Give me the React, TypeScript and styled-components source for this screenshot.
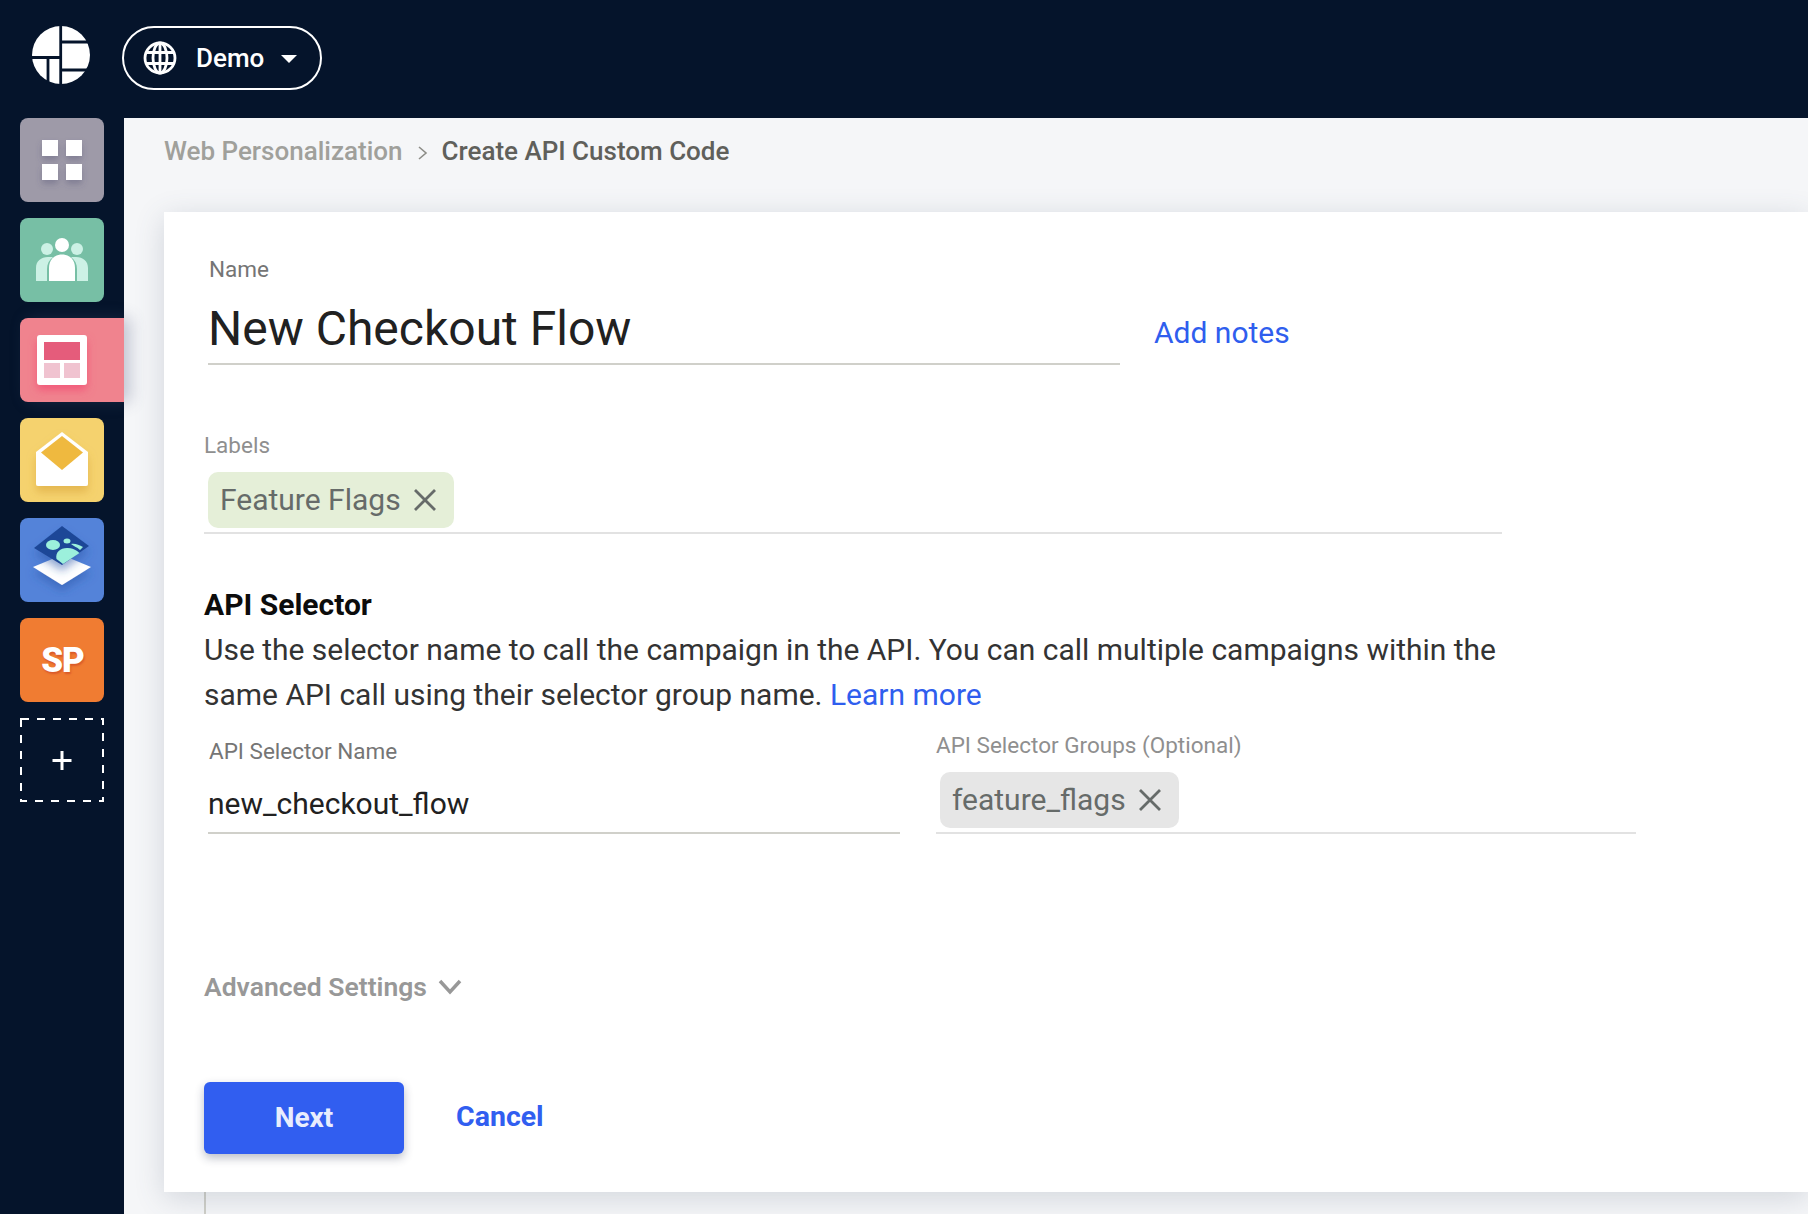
import React from "react";
import styled, { createGlobalStyle } from "styled-components";

const Global = createGlobalStyle`
  html, body { margin: 0; padding: 0; height: 100%; overflow: hidden; background: #05142b; }
  #root { height: 100%; }
  * { box-sizing: border-box; }
`;

const Page = styled.div`
  width: 1808px;
  height: 1214px;
  display: grid;
  grid-template-rows: 118px 1fr;
  background: #05142b;
  font-family: Roboto, "Liberation Sans", sans-serif;
  overflow: hidden;
`;

const TopBar = styled.header`
  display: flex;
  align-items: flex-start;
  padding: 26px 0 0 32px;
  gap: 32px;
`;

const Logo = styled.svg`
  width: 58px;
  height: 58px;
  display: block;
`;

const SitePill = styled.button`
  width: 200px;
  height: 64px;
  border: 2px solid #fff;
  border-radius: 32px;
  background: transparent;
  color: #fff;
  display: flex;
  align-items: center;
  padding: 0 0 0 19px;
  font: 500 26px/30px Roboto, sans-serif;
`;

const SiteName = styled.span`
  margin-left: 19px;
`;

const Caret = styled.span`
  margin-left: 17px;
  margin-top: 2px;
  width: 0;
  height: 0;
  border-left: 8px solid transparent;
  border-right: 8px solid transparent;
  border-top: 8px solid #fff;
`;

const Body = styled.div`
  display: grid;
  grid-template-columns: 124px 1fr;
  min-height: 0;
`;

const Sidebar = styled.nav`
  display: flex;
  flex-direction: column;
  align-items: flex-start;
  gap: 16px;
  padding-left: 20px;
`;

const Tile = styled.div<{ $bg: string; $active?: boolean }>`
  width: ${(p) => (p.$active ? "104px" : "84px")};
  height: 84px;
  flex: none;
  background: ${(p) => p.$bg};
  border-radius: ${(p) => (p.$active ? "8px 0 0 8px" : "8px")};
  box-shadow: ${(p) => (p.$active ? "6px 0 16px rgba(70, 80, 120, 0.3)" : "none")};
  position: relative;
  z-index: ${(p) => (p.$active ? 2 : 0)};
  display: flex;
  align-items: center;
  justify-content: flex-start;
`;

const TileArt = styled.svg`
  width: 84px;
  height: 84px;
  display: block;
  flex: none;
`;

const SpMark = styled.span`
  width: 84px;
  padding: 2px 0 0 1px;
  text-align: center;
  color: #fff;
  font: 900 35px/82px Roboto, sans-serif;
  letter-spacing: -1px;
  text-shadow: 1px 2px 2px #d95a2a;
`;

const AddTile = styled.div`
  width: 84px;
  height: 84px;
  flex: none;
`;

const Main = styled.main`
  background: #f5f6f8;
  min-width: 0;
  display: flex;
  flex-direction: column;
  padding-left: 40px;
`;

const Breadcrumb = styled.div`
  height: 94px;
  flex: none;
  padding-top: 18px;
  display: flex;
  align-items: flex-start;
  font: 500 26px/30px Roboto, sans-serif;
`;

const CrumbLink = styled.span`
  color: #a0a09b;
`;

const CrumbSep = styled.svg`
  width: 12px;
  height: 16px;
  margin: 9px 13px 0 14px;
`;

const CrumbCurrent = styled.span`
  color: #60605b;
`;

const Card = styled.section`
  height: 980px;
  flex: none;
  background: #fff;
  padding: 45px 0 0 40px;
  box-shadow: 0 6px 28px rgba(70, 85, 110, 0.2);
  position: relative;
  z-index: 1;
`;

const TailLine = styled.div`
  width: 2px;
  flex: 1;
  margin-left: 40px;
  background: #cfcfc8;
`;

const FieldLabel = styled.label<{ $muted?: boolean; $inset?: number }>`
  display: block;
  font: 400 22.5px/24px Roboto, sans-serif;
  color: ${(p) => (p.$muted ? "#8f8f8f" : "#757575")};
  margin-left: ${(p) => p.$inset ?? 0}px;
`;

const NameRow = styled.div`
  display: flex;
  align-items: flex-end;
  margin-left: 4px;
`;

const NameField = styled.div`
  width: 912px;
`;

const NameValue = styled.div`
  font: 400 48px/60px Roboto, sans-serif;
  color: #212121;
  margin-top: 18px;
  padding-bottom: 4px;
  border-bottom: 2px solid #d0d0ca;
`;

const TextLink = styled.a`
  color: #2f5eee;
  font-size: 30px;
  line-height: 36px;
`;

const NotesLink = styled(TextLink)`
  margin: 0 0 14px 34px;
`;

const LabelsField = styled.div`
  width: 1298px;
  margin-top: 68px;
`;

const ChipLine = styled.div<{ $pad: number }>`
  display: flex;
  padding: 15px 0 4px ${(p) => p.$pad}px;
  border-bottom: 2px solid #e2e2e2;
`;

const Chip = styled.span<{ $bg: string }>`
  height: 56px;
  display: inline-flex;
  align-items: center;
  gap: 12px;
  padding: 0 17px 0 12px;
  border-radius: 10px;
  background: ${(p) => p.$bg};
  color: #666b69;
  font: 400 30px/36px Roboto, sans-serif;
`;

const ChipClose = styled.svg`
  width: 24px;
  height: 24px;
  display: block;
`;

const SectionTitle = styled.h2`
  margin: 53px 0 0;
  font: 700 30px/36px Roboto, sans-serif;
  color: #0c0c0c;
`;

const Description = styled.p`
  margin: 4px 0 0;
  width: 1340px;
  font: 400 29.97px/45px Roboto, sans-serif;
  color: #333;
`;

const SelectorGrid = styled.div`
  display: grid;
  grid-template-columns: 692px 700px;
  column-gap: 36px;
  align-items: end;
  margin: 16px 0 0 4px;
`;

const SelectorValue = styled.div`
  font: 400 30px/40px Roboto, sans-serif;
  color: #212121;
  margin-top: 21px;
  padding-bottom: 8px;
  border-bottom: 2px solid #d0d0ca;
`;

const AdvancedToggle = styled.div`
  margin-top: 138px;
  display: flex;
  align-items: center;
  gap: 11px;
  font: 600 26.5px/30px Roboto, sans-serif;
  color: #989898;
`;

const Chevron = styled.svg`
  width: 24px;
  height: 16px;
  display: block;
`;

const Actions = styled.div`
  margin-top: 80px;
  display: flex;
  align-items: center;
  gap: 52px;
`;

const PrimaryButton = styled.button`
  width: 200px;
  height: 72px;
  border: 0;
  border-radius: 6px;
  background: #315ef0;
  color: #e8edfd;
  font: 700 28px/36px Roboto, sans-serif;
  box-shadow: 0 4px 10px rgba(30, 40, 70, 0.3);
`;

const CancelLink = styled.a`
  color: #315ef0;
  font: 700 28.500px/36px Roboto, sans-serif;
  margin-top: -3px;
`;

const CloseGlyph = () => (
  <ChipClose viewBox="0 0 24 24">
    <path d="M2 2 22 22M22 2 2 22" stroke="#666b69" strokeWidth="2.8" fill="none" />
  </ChipClose>
);

const ArtDefs = () => (
  <defs>
    <filter id="soft" x="-30%" y="-30%" width="160%" height="170%">
      <feDropShadow dx="0" dy="4" stdDeviation="3" floodColor="#4a4a70" floodOpacity="0.35" />
    </filter>
    <filter id="softPink" x="-30%" y="-30%" width="160%" height="170%">
      <feDropShadow dx="0" dy="5" stdDeviation="4" floodColor="#f24f75" floodOpacity="0.8" />
    </filter>
    <filter id="softAmber" x="-30%" y="-30%" width="160%" height="170%">
      <feDropShadow dx="0" dy="6" stdDeviation="4" floodColor="#d9a53a" floodOpacity="0.6" />
    </filter>
    <filter id="softBlue" x="-30%" y="-30%" width="160%" height="170%">
      <feDropShadow dx="0" dy="6" stdDeviation="4" floodColor="#2c55a8" floodOpacity="0.5" />
    </filter>
  </defs>
);

export default function App() {
  return (
    <Page>
      <Global />
      <TopBar>
        <Logo viewBox="0 0 58 58">
          <circle cx="29" cy="29" r="29" fill="#fff" />
          <path
            d="M28.700 0V58M30 16H58M0 31.500H29M30 44H58M16 31.500V58"
            stroke="#05142b"
            strokeWidth="2.800"
            fill="none"
          />
        </Logo>
        <SitePill>
          <svg width="34" height="34" viewBox="0 0 34 34" fill="none" stroke="#fff" strokeWidth="2.8">
            <circle cx="17" cy="17" r="15" />
            <ellipse cx="17" cy="17" rx="7" ry="15" />
            <path d="M3.500 11.500H30.500M3.500 22.500H30.500M17 2V32" />
          </svg>
          <SiteName>Demo</SiteName>
          <Caret />
        </SitePill>
      </TopBar>
      <Body>
        <Sidebar>
          <Tile $bg="#9e9aa8">
            <TileArt viewBox="0 0 84 84">
              <ArtDefs />
              <g fill="#fff" filter="url(#soft)">
                <rect x="22" y="22" width="16" height="16" />
                <rect x="46" y="22" width="16" height="16" />
                <rect x="22" y="46" width="16" height="16" />
                <rect x="46" y="46" width="16" height="16" />
              </g>
            </TileArt>
          </Tile>
          <Tile $bg="#77bfa5">
            <TileArt viewBox="0 0 84 84">
              <g fill="#ccf1e5">
                <circle cx="27" cy="31" r="6" />
                <circle cx="57" cy="31" r="6" />
                <path d="M16 63V50C16 43 21 39 28 39H33C29 42 27 46 27 51V63Z" />
                <path d="M68 63V50C68 43 63 39 56 39H51C55 42 57 46 57 51V63Z" />
              </g>
              <g fill="#fff">
                <circle cx="42" cy="27" r="7" />
                <path d="M29 63V50C29 42 34 36.500 42 36.500S55 42 55 50V63Z" />
              </g>
            </TileArt>
          </Tile>
          <Tile $bg="#f0838e" $active>
            <TileArt viewBox="0 0 84 84">
              <rect x="17" y="17" width="50" height="50" rx="3" fill="#fff" filter="url(#softPink)" />
              <rect x="24" y="24" width="36" height="18" fill="#e55c7b" />
              <rect x="24" y="45" width="16" height="15" fill="#f0c3d0" />
              <rect x="44" y="45" width="16" height="15" fill="#f0c3d0" />
            </TileArt>
          </Tile>
          <Tile $bg="#f5d26e">
            <TileArt viewBox="0 0 84 84">
              <path d="M16 34 42 14 68 34V66Q68 68 66 68H18Q16 68 16 66Z" fill="#fff" filter="url(#softAmber)" />
              <path d="M42 18 63 34.500 42 52 21 34.500Z" fill="#efb93f" />
            </TileArt>
          </Tile>
          <Tile $bg="#5483d9">
            <TileArt viewBox="0 0 84 84">
              <path d="M13 49 42 37 71 49 42 67Z" fill="#fff" filter="url(#softBlue)" />
              <path d="M42 8 69 28 42 47 14 30Z" fill="#1f4697" filter="url(#softBlue)" />
              <g fill="#9cf0dc">
                <ellipse cx="33" cy="27" rx="7" ry="5" />
                <ellipse cx="47" cy="23" rx="3.500" ry="2.500" />
                <path d="M36.500 41C35 34 41 29.500 48 30S58 34 59.500 35L43 46Z" />
                <path d="M51 26C55 25 59 27 63 29L60 32C57 29 53 28 51 26Z" />
              </g>
            </TileArt>
          </Tile>
          <Tile $bg="#f07c32">
            <SpMark>SP</SpMark>
          </Tile>
          <AddTile>
            <TileArt viewBox="0 0 84 84">
              <rect x="1" y="1" width="82" height="82" fill="none" stroke="#fff" strokeWidth="2" strokeDasharray="8 8" />
              <path d="M42 33V52M32.500 42.500H51.500" stroke="#fff" strokeWidth="3" fill="none" />
            </TileArt>
          </AddTile>
        </Sidebar>
        <Main>
          <Breadcrumb>
            <CrumbLink>Web Personalization</CrumbLink>
            <CrumbSep viewBox="0 0 12 16">
              <path d="M2 2 9 8 2 14" stroke="#8d8d88" strokeWidth="1.600" fill="none" />
            </CrumbSep>
            <CrumbCurrent>Create API Custom Code</CrumbCurrent>
          </Breadcrumb>
          <Card>
            <NameRow>
              <NameField>
                <FieldLabel $inset={1}>Name</FieldLabel>
                <NameValue>New Checkout Flow</NameValue>
              </NameField>
              <NotesLink>Add notes</NotesLink>
            </NameRow>
            <LabelsField>
              <FieldLabel $muted>Labels</FieldLabel>
              <ChipLine $pad={4}>
                <Chip $bg="#e5efd8">
                  Feature Flags
                  <CloseGlyph />
                </Chip>
              </ChipLine>
            </LabelsField>
            <SectionTitle>API Selector</SectionTitle>
            <Description>
              Use the selector name to call the campaign in the API. You can call multiple campaigns within the
              <br />
              same API call using their selector group name. <TextLink>Learn more</TextLink>
            </Description>
            <SelectorGrid>
              <div>
                <FieldLabel $inset={1}>API Selector Name</FieldLabel>
                <SelectorValue>new_checkout_flow</SelectorValue>
              </div>
              <div>
                <FieldLabel $muted>API Selector Groups (Optional)</FieldLabel>
                <ChipLine $pad={4}>
                  <Chip $bg="#e6e6e6">
                    feature_flags
                    <CloseGlyph />
                  </Chip>
                </ChipLine>
              </div>
            </SelectorGrid>
            <AdvancedToggle>
              Advanced Settings
              <Chevron viewBox="0 0 24 16">
                <path d="M2 2 12 13 22 2" stroke="#989898" strokeWidth="3.500" fill="none" />
              </Chevron>
            </AdvancedToggle>
            <Actions>
              <PrimaryButton>Next</PrimaryButton>
              <CancelLink>Cancel</CancelLink>
            </Actions>
          </Card>
          <TailLine />
        </Main>
      </Body>
    </Page>
  );
}
